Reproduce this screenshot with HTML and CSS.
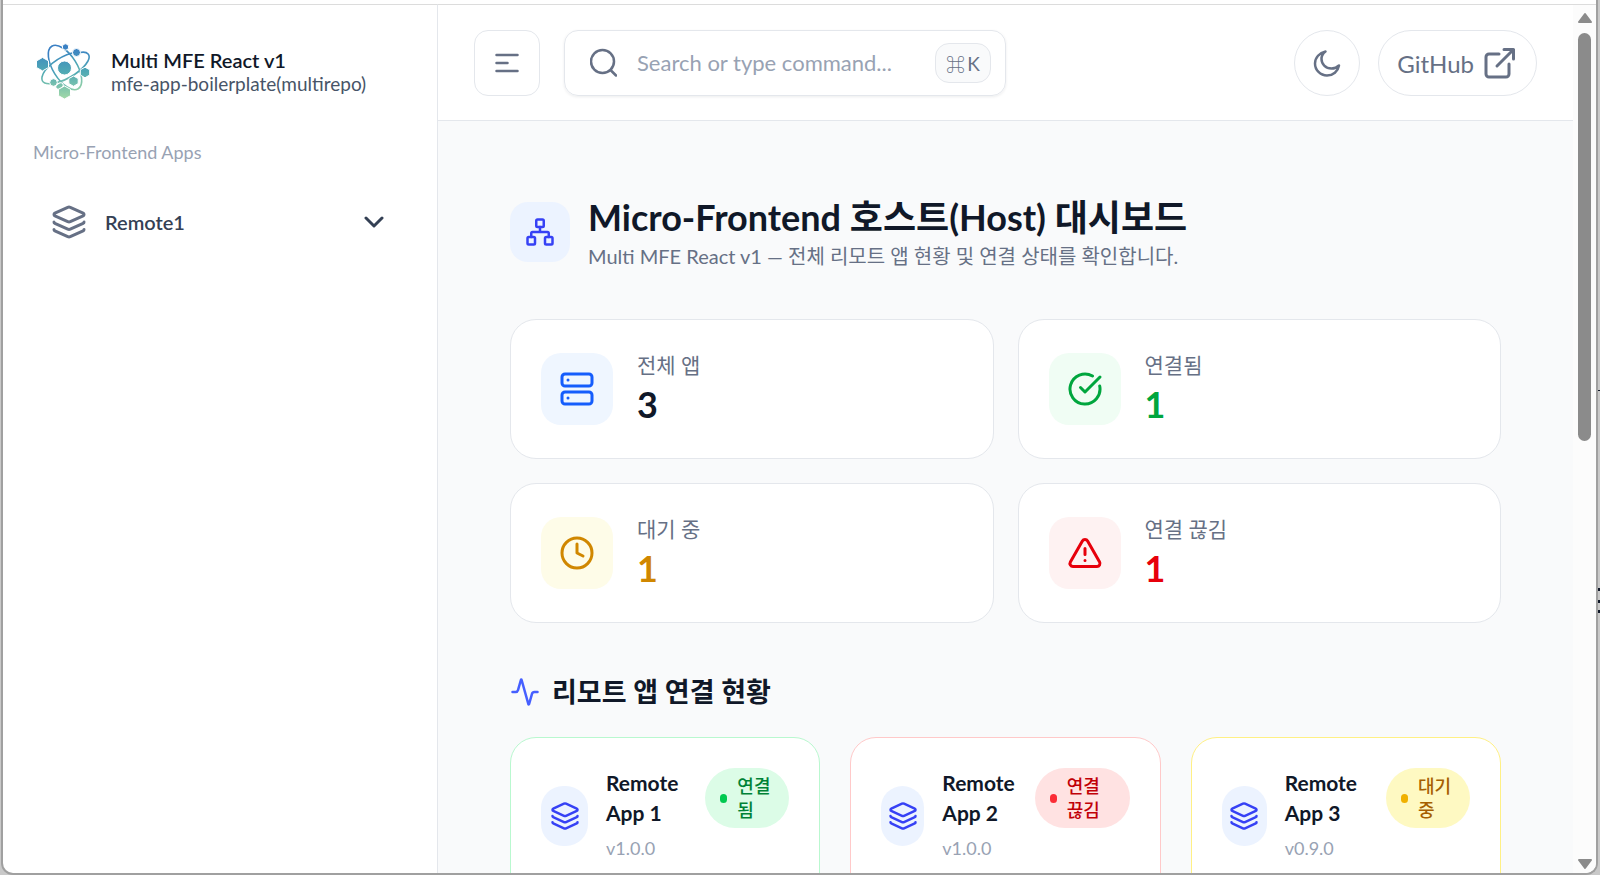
FILE: index.html
```
<!DOCTYPE html>
<html lang="ko">
<head>
<meta charset="utf-8">
<title>Multi MFE React v1</title>
<link rel="stylesheet" href="styles.css">
</head>
<body>
<svg class="defs" width="0" height="0" aria-hidden="true">
  <symbol id="layers" viewBox="0 0 24 24"><path d="M12.83 2.18a2 2 0 0 0-1.66 0L2.6 6.08a1 1 0 0 0 0 1.83l8.58 3.91a2 2 0 0 0 1.66 0l8.58-3.9a1 1 0 0 0 0-1.83z"/><path d="M2 12a1 1 0 0 0 .58.91l8.6 3.91a2 2 0 0 0 1.65 0l8.58-3.9A1 1 0 0 0 22 12"/><path d="M2 17a1 1 0 0 0 .58.91l8.6 3.91a2 2 0 0 0 1.65 0l8.58-3.9A1 1 0 0 0 22 17"/></symbol>
</svg>
<div class="window">
  <aside class="sidebar">
    <div class="brand">
      <svg class="brand-logo" viewBox="0 0 54 56" aria-hidden="true">
        <defs><linearGradient id="g" gradientUnits="userSpaceOnUse" x1="27" y1="4" x2="27" y2="54"><stop offset="0" stop-color="#3a80c4"/><stop offset=".5" stop-color="#4fa9b4"/><stop offset="1" stop-color="#9dd6a8"/></linearGradient></defs>
        <g fill="none" stroke="url(#g)" stroke-width="1.6">
          <ellipse cx="28" cy="24.500" rx="12" ry="25" transform="rotate(-32 28 24.500)"/>
          <path d="M43 9.500C51 8 54 12 51 18C46 27 32 37 18 40C9 42 4 40 5 34C7 25 21 14 35 10"/>
        </g>
        <g fill="url(#g)" stroke="#fff" stroke-width="1">
          <circle cx="27.500" cy="25" r="7"/><circle cx="28.500" cy="4" r="3.200"/><circle cx="39.500" cy="9.500" r="4"/><circle cx="16.500" cy="39.500" r="3.800"/><ellipse cx="22.500" cy="43" rx="4" ry="2.600" transform="rotate(-32 22.500 43)"/>
          <path d="M5.500 14.500l6 3.400v6.600l-6 3.400-6-3.400v-6.600zM48 24.200l4.700 2.600v5.200L48 34.800 43.300 32v-5.200zM36.500 33l4.700 2.600v5l-4.700 2.700-4.700-2.700v-5zM27.500 43l6 3.300v6.400l-6 3.300-6-3.300v-6.400z"/>
        </g>
      </svg>
      <div class="brand-text"><strong class="brand-name">Multi MFE React v1</strong><span class="brand-sub">mfe-app-boilerplate(multirepo)</span></div>
    </div>
    <h2 class="nav-title">Micro-Frontend Apps</h2>
    <nav>
      <button class="nav-item" type="button">
        <svg class="icon icon-nav"><use href="#layers"/></svg>
        <span class="nav-label">Remote1</span>
        <svg class="icon icon-chevron" viewBox="0 0 20 12"><path d="M2 2l8 8 8-8"/></svg>
      </button>
    </nav>
  </aside>
  <div class="page">
    <header class="topbar">
      <button class="menu-button" type="button" aria-label="Toggle sidebar"><svg class="icon" width="24" height="20" viewBox="0 0 24 20"><path d="M1.500 2h21M1.500 10h11M1.500 18h21"/></svg></button>
      <label class="search">
        <svg class="icon" width="27" height="30" viewBox="0 0 27 30"><circle cx="12.500" cy="13.500" r="11.500"/><path d="M20.500 22l5.500 5.500"/></svg>
        <input class="search-input" type="text" aria-label="Search" placeholder="Search or type command...">
        <kbd class="shortcut"><span class="command">⌘</span><span>K</span></kbd>
      </label>
      <div class="actions">
        <button class="round-button" type="button" aria-label="Toggle theme"><svg class="icon" width="30" height="30" viewBox="0 0 30 30"><path d="M13.500 3.500C7.500 4.700 3 9.600 3 15.500A12 12 0 0 0 15 27.500c6 0 11-4.200 12-10-2 2-4.500 3-7.500 3C13.500 20.500 9.500 16 9.500 11c0-3 1.500-5.700 4-7.500z"/></svg></button>
        <a class="github" href="#github">GitHub <svg class="icon" width="32" height="32" viewBox="0 0 32 32"><path d="M15 7H5a3 3 0 0 0-3 3v17a3 3 0 0 0 3 3h17a3 3 0 0 0 3-3V17M13 19L29.500 2.500M20 2.500h9.500V12"/></svg></a>
      </div>
    </header>
    <main class="content">
      <div class="heading">
        <span class="heading-icon"><svg class="icon" width="30" height="30" viewBox="0 0 24 24"><rect x="16" y="16" width="6" height="6" rx="1"/><rect x="2" y="16" width="6" height="6" rx="1"/><rect x="9" y="2" width="6" height="6" rx="1"/><path d="M5 16v-3a1 1 0 0 1 1-1h12a1 1 0 0 1 1 1v3M12 12V8"/></svg></span>
        <div><h1 class="title">Micro-Frontend 호스트(Host) 대시보드</h1><p class="subtitle">Multi MFE React v1 — 전체 리모트 앱 현황 및 연결 상태를 확인합니다.</p></div>
      </div>
      <section class="stats" aria-label="전체 리모트 앱 현황">
        <article class="stat"><span class="stat-icon blue"><svg class="icon" viewBox="0 0 24 24"><rect x="2" y="2" width="20" height="8" rx="2"/><rect x="2" y="14" width="20" height="8" rx="2"/><path d="M6 6h.01M6 18h.01"/></svg></span><div><p class="stat-label">전체 앱</p><p class="stat-value">3</p></div></article>
        <article class="stat"><span class="stat-icon green"><svg class="icon" viewBox="0 0 24 24"><path d="M21.800 10A10 10 0 1 1 17 3.335"/><path d="m9 11 3 3L22 4"/></svg></span><div><p class="stat-label">연결됨</p><p class="stat-value green-text">1</p></div></article>
        <article class="stat"><span class="stat-icon yellow"><svg class="icon" viewBox="0 0 24 24"><circle cx="12" cy="12" r="10"/><path d="M12 6v6l4 2"/></svg></span><div><p class="stat-label">대기 중</p><p class="stat-value yellow-text">1</p></div></article>
        <article class="stat"><span class="stat-icon red"><svg class="icon" viewBox="0 0 24 24"><path d="m21.730 18-8-14a2 2 0 0 0-3.480 0l-8 14A2 2 0 0 0 4 21h16a2 2 0 0 0 1.730-3M12 9v4M12 17h.01"/></svg></span><div><p class="stat-label">연결 끊김</p><p class="stat-value red-text">1</p></div></article>
      </section>
      <h2 class="section-title"><svg class="icon" width="30" height="30" viewBox="0 0 24 24"><path d="M22 12h-2.480a2 2 0 0 0-1.930 1.460l-2.350 8.360a.25.25 0 0 1-.48 0L9.240 2.180a.25.25 0 0 0-.48 0l-2.350 8.360A2 2 0 0 1 4.490 12H2"/></svg>리모트 앱 연결 현황</h2>
      <section class="apps" aria-label="리모트 앱 연결 현황">
        <article class="app connected"><span class="app-icon"><svg class="icon"><use href="#layers"/></svg></span><div class="app-info"><h3 class="app-name">Remote<br>App 1</h3><p class="version">v1.0.0</p></div><span class="badge"><i class="dot"></i><span>연결<br>됨</span></span></article>
        <article class="app lost"><span class="app-icon"><svg class="icon"><use href="#layers"/></svg></span><div class="app-info"><h3 class="app-name">Remote<br>App 2</h3><p class="version">v1.0.0</p></div><span class="badge"><i class="dot"></i><span>연결<br>끊김</span></span></article>
        <article class="app waiting"><span class="app-icon"><svg class="icon"><use href="#layers"/></svg></span><div class="app-info"><h3 class="app-name">Remote<br>App 3</h3><p class="version">v0.9.0</p></div><span class="badge"><i class="dot"></i><span>대기<br>중</span></span></article>
      </section>
    </main>
  </div>
  <div class="scrollbar" aria-hidden="true">
    <svg width="16" height="12" viewBox="0 0 16 12"><path d="M8 2l6 8H2z"/></svg>
    <div class="track"><div class="thumb"></div></div>
    <svg width="16" height="12" viewBox="0 0 16 12"><path d="M2 2h12l-6 8z"/></svg>
  </div>
</div>
</body>
</html>
```
FILE: styles.css
```
* { box-sizing: border-box; }
body {
  margin: 0;
  height: 100vh;
  overflow: hidden;
  padding: 0 2px 0 1px;
  display: flex;
  background:
    linear-gradient(#101828, #101828) right 0 top 390px / 2px 1px no-repeat,
    linear-gradient(#101828, #101828) right 0 top 588px / 2px 3px no-repeat,
    linear-gradient(#101828, #101828) right 0 top 600px / 2px 3px no-repeat,
    linear-gradient(#101828, #101828) right 0 top 610px / 2px 3px no-repeat,
    #c9c9c9;
  color: #101828;
  font-family: Lato, "Noto Sans CJK KR", sans-serif;
}
h1, h2, h3, p { margin: 0; }
button, input, kbd { font: inherit; color: inherit; }
button { cursor: pointer; }
.defs { position: absolute; }
.icon {
  flex: none;
  fill: none;
  stroke: currentColor;
  stroke-width: 2;
  stroke-linecap: round;
  stroke-linejoin: round;
}
.window {
  flex: 1;
  min-width: 0;
  display: flex;
  overflow: hidden;
  background: #fff;
  border: 2px solid #a0a0a0;
  border-top: 0;
  border-radius: 0 0 12px 12px;
}
.window > * { margin-top: 4px; border-top: 1px solid #dcdcdc; }

.sidebar {
  flex: none;
  width: 435px;
  padding: 36px 30px;
  border-right: 1px solid #e4e7ec;
}
.brand { display: flex; align-items: center; gap: 20px; padding-left: 4px; }
.brand-logo { width: 54px; height: 60px; overflow: visible; }
.brand-text { display: flex; flex-direction: column; }
.brand-name { font-size: 20px; line-height: 26px; font-weight: 600; }
.brand-sub { font-size: 19px; line-height: 22px; color: #475467; }
.nav-title {
  margin-top: 36px;
  font-size: 18px;
  line-height: 30px;
  font-weight: 400;
  color: #98a2b3;
}
.nav-item {
  width: 100%;
  margin-top: 25px;
  padding: 12px 23px 12px 18px;
  display: flex;
  align-items: center;
  gap: 18px;
  border: 0;
  background: none;
  color: #344054;
  text-align: left;
}
.icon-nav { width: 36px; height: 36px; color: #667085; }
.nav-label { flex: 1; font-size: 20px; line-height: 30px; font-weight: 600; }
.icon-chevron { width: 20px; height: 12px; stroke-width: 3; }

.page { flex: 1; min-width: 0; background: #f9fafb; }
.topbar {
  display: flex;
  align-items: center;
  gap: 24px;
  padding: 25px 36px 24px;
  background: #fff;
  border-bottom: 1px solid #e4e7ec;
  color: #667085;
}
.topbar .icon { stroke-width: 2.5; }
.menu-button, .round-button {
  width: 66px;
  height: 66px;
  padding: 0;
  display: grid;
  place-items: center;
  background: #fff;
  border: 1px solid #e4e7ec;
  border-radius: 14px;
}
.search {
  width: 442px;
  height: 66px;
  padding: 0 14px 0 25px;
  display: flex;
  align-items: center;
  gap: 20px;
  border: 1px solid #e4e7ec;
  border-radius: 14px;
  box-shadow: 0 1px 3px rgba(16, 24, 40, .08);
}
.search-input {
  flex: 1;
  min-width: 0;
  padding: 0;
  border: 0;
  outline: 0;
  background: none;
  font-size: 22px;
  line-height: 30px;
}
.search-input::placeholder { color: #98a2b3; opacity: 1; }
.shortcut {
  width: 56px;
  height: 40px;
  display: flex;
  align-items: center;
  justify-content: center;
  gap: 2px;
  font-size: 19px;
  background: #f9fafb;
  border: 1px solid #e4e7ec;
  border-radius: 14px;
}
.command { font-family: "DejaVu Sans", sans-serif; font-weight: 300; }
.actions { margin-left: auto; display: flex; gap: 18px; }
.round-button { border-radius: 50%; }
.github {
  height: 66px;
  padding: 0 20px 0 18px;
  display: flex;
  align-items: center;
  gap: 10px;
  border: 1px solid #e4e7ec;
  border-radius: 33px;
  font-size: 24px;
  color: inherit;
  text-decoration: none;
}
.topbar .github .icon { stroke-width: 3; }

.content { padding: 72px; }
.heading { display: flex; align-items: center; gap: 18px; }
.heading-icon {
  width: 60px;
  height: 60px;
  display: grid;
  place-items: center;
  border-radius: 18px;
  background: #ecf3ff;
  color: #3641f5;
}
.title { font-size: 36px; line-height: 48px; font-weight: 700; }
.subtitle { font-size: 20px; line-height: 30px; color: #667085; }
.stats {
  margin-top: 48px;
  display: grid;
  grid-template-columns: 1fr 1fr;
  gap: 24px;
}
.stat {
  display: flex;
  align-items: center;
  gap: 24px;
  padding: 30px;
  background: #fff;
  border: 1px solid #e4e7ec;
  border-radius: 26px;
}
.stat-icon {
  width: 72px;
  height: 72px;
  display: grid;
  place-items: center;
  border-radius: 20px;
}
.stat-icon .icon { width: 36px; height: 36px; }
.blue { background: #eff6ff; color: #155dfc; }
.green { background: #f0fdf4; color: #00a63e; }
.yellow { background: #fefce8; color: #d08700; }
.red { background: #fef2f2; color: #e7000b; }
.stat-label { font-size: 21px; line-height: 30px; color: #667085; }
.stat-value { font-size: 36px; line-height: 48px; font-weight: 700; }
.green-text { color: #00a63e; }
.yellow-text { color: #d08700; }
.red-text { color: #e7000b; }
.section-title {
  margin-top: 48px;
  display: flex;
  align-items: center;
  gap: 12px;
  font-size: 27px;
  line-height: 42px;
  font-weight: 600;
}
.section-title .icon { color: #465fff; }
.apps {
  margin-top: 24px;
  display: grid;
  grid-template-columns: repeat(3, 1fr);
  gap: 30px;
}
.app {
  min-height: 300px;
  display: flex;
  align-items: flex-start;
  padding: 30px;
  background: #fff;
  border: 1px solid;
  border-radius: 26px;
}
.app-icon {
  width: 47px;
  height: 60px;
  margin: 18px 18px 0 0;
  display: grid;
  place-items: center;
  border-radius: 22px;
  background: #ecf3ff;
  color: #3641f5;
}
.app-icon .icon { width: 30px; height: 30px; }
.lost .app-icon { width: 43px; }
.waiting .app-icon { width: 45px; }
.app-info { flex: 1; }
.app-name { font-size: 21px; line-height: 30px; font-weight: 700; }
.version { margin-top: 6px; font-size: 18px; line-height: 28px; color: #98a2b3; }
.badge {
  width: 84px;
  padding: 6px 15px;
  display: flex;
  align-items: center;
  gap: 10px;
  border-radius: 30px;
  font-size: 18px;
  line-height: 24px;
  font-weight: 500;
}
.lost .badge { width: 95px; }
.dot { width: 7px; height: 9px; border-radius: 4px; background: currentColor; }
.connected { border-color: #b9f8cf; }
.connected .badge { background: #dcfce7; color: #008236; }
.connected .dot { background: #00c950; }
.lost { border-color: #ffc9c9; }
.lost .badge { background: #ffe2e2; color: #c10007; }
.lost .dot { background: #fb2c36; }
.waiting { border-color: #fff085; }
.waiting .badge { background: #fef9c2; color: #a65f00; }
.waiting .dot { background: #f0b100; }

.scrollbar {
  flex: none;
  width: 23px;
  padding: 7px 0 3px;
  display: flex;
  flex-direction: column;
  align-items: center;
  gap: 9px;
  background: #fcfcfc;
}
.scrollbar svg { fill: #8b8b8b; stroke: #8b8b8b; stroke-width: 2; stroke-linejoin: round; }
.track { flex: 1; width: 13px; }
.thumb { height: 50%; border-radius: 7px; background: #8b8b8b; }
```
